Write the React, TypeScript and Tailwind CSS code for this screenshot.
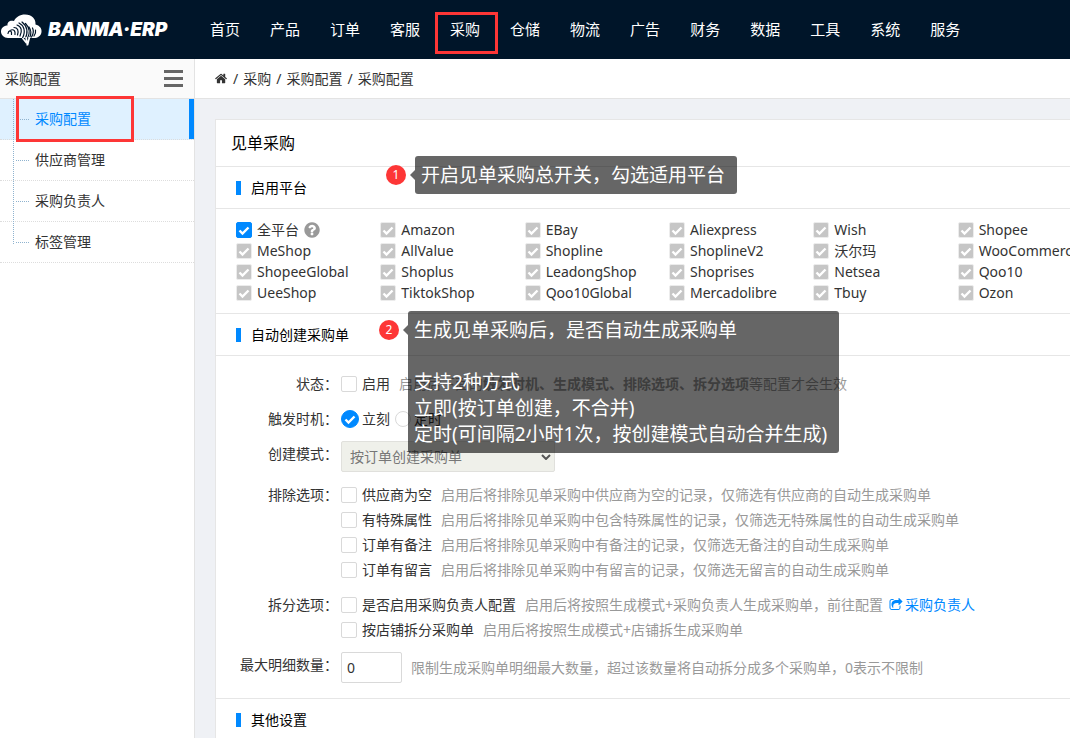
import { Fragment, useState, type ReactNode } from "react";

const navItems = ["首页", "产品", "订单", "客服", "采购", "仓储", "物流", "广告", "财务", "数据", "工具", "系统", "服务"];

const sideItems = ["采购配置", "供应商管理", "采购负责人", "标签管理"];

const crumbs = ["采购", "采购配置", "采购配置"];

const platforms = [
  "全平台", "Amazon", "EBay", "Aliexpress", "Wish", "Shopee",
  "MeShop", "AllValue", "Shopline", "ShoplineV2", "沃尔玛", "WooCommerce",
  "ShopeeGlobal", "Shoplus", "LeadongShop", "Shoprises", "Netsea", "Qoo10",
  "UeeShop", "TiktokShop", "Qoo10Global", "Mercadolibre", "Tbuy", "Ozon",
];

const excludeOptions = [
  { name: "供应商为空", hint: "启用后将排除见单采购中供应商为空的记录，仅筛选有供应商的自动生成采购单" },
  { name: "有特殊属性", hint: "启用后将排除见单采购中包含特殊属性的记录，仅筛选无特殊属性的自动生成采购单" },
  { name: "订单有备注", hint: "启用后将排除见单采购中有备注的记录，仅筛选无备注的自动生成采购单" },
  { name: "订单有留言", hint: "启用后将排除见单采购中有留言的记录，仅筛选无留言的自动生成采购单" },
];

function Logo() {
  return (
    <a href="#" className="flex w-[195px] shrink-0 items-center gap-[6px] text-white">
      <svg viewBox="0 0 42 34" className="h-[34px] w-[42px] shrink-0">
        <path
          fill="#fff"
          d="M8 25C4 25 1 22 1 18.500C1 15 4 12.500 7.500 12.500C7 9 10 7 14 8C16 4 20 1.500 25 1.500C32 1.500 36 6 35.500 11.500C39.500 12.500 42 15.500 41.500 19C41 23 37.500 25 34 25Z"
        />
        {/* zebra stripes */}
        <g fill="none" stroke="#001529" strokeWidth="1.200" strokeLinecap="round">
          <path d="M8 20.500c.5-3 3-3.500 3.500-1v2M11 17c3-1 4.500 1 4 4.500M14 14.500c3.500 0 5 3 3.500 7.500M17 12c4.500 1.500 5.500 6 3 11M19 10c5 2.500 7 8 3.500 15" />
          <path d="M22 9c5 4 7 9 3 17.500M25.500 10.500c4 4 5 9 2 15M29 14c2.500 3.500 2.500 7 .5 11M32.500 15c1.500 3 1 6-1 9M35.500 17c.5 2.500 0 4-1.500 6" />
        </g>
        <path fill="none" stroke="#fff" strokeWidth="1.700" d="M22.500 25l4 5M26 24l1.500 8.500M29.500 24l-2 8" />
      </svg>
      <span className="font-[Inter,sans-serif] text-[19px] leading-6 font-black italic">BANMA·ERP</span>
    </a>
  );
}

function FaIcon({ d, className }: { d: string; className: string }) {
  return (
    <svg viewBox="0 0 1792 1792" className={className} fill="currentColor" aria-hidden="true">
      <path d={d} />
    </svg>
  );
}

const homePath =
  "M1408 992v480q0 26-19 45t-45 19h-384v-384h-256v384h-384q-26 0-45-19t-19-45v-480q0-1 .5-3t.5-3l575-474 575 474q1 2 1 6zm223-69l-62 74q-8 9-21 11h-3q-13 0-21-7l-692-577-692 577q-12 8-24 7-13-2-21-11l-62-74q-8-10-7-23.5t11-21.5l719-599q32-26 76-26t76 26l244 204v-195q0-14 9-23t23-9h192q14 0 23 9t9 23v408l219 182q10 8 11 21.5t-7 23.5z";
const sharePath =
  "M1472 989v259q0 119-84.5 203.5t-203.5 84.5h-832q-119 0-203.5-84.5t-84.5-203.5v-832q0-119 84.5-203.5t203.5-84.5h255q13 0 22.5 9.5t9.5 22.5q0 27-26 32-77 26-133 60-10 4-16 4h-112q-66 0-113 47t-47 113v832q0 66 47 113t113 47h832q66 0 113-47t47-113v-214q0-19 18-29 28-13 54-37 16-16 35-8 21 9 21 29zm237-496l-384 384q-18 19-45 19-12 0-25-5-39-17-39-59v-192h-160q-323 0-438 131-119 137-74 473 3 23-20 34-8 2-12 2-16 0-26-13-10-14-21-31t-39.5-68.5-49.5-99.5-38.5-114-17.5-122q0-49 3.5-91t14-90 28-88 47-81.5 68.5-74 94.5-61.5 124.5-48.5 159.5-30.5 196.5-11h160v-192q0-42 39-59 13-5 25-5 26 0 45 19l384 384q19 19 19 45t-19 45z";
const questionPath =
  "M1024 1376v-192q0-14-9-23t-23-9h-192q-14 0-23 9t-9 23v192q0 14 9 23t23 9h192q14 0 23-9t9-23zm256-672q0-88-55.5-163t-138.5-116-170-41q-243 0-371 213-15 24 8 42l132 100q7 6 19 6 16 0 25-12 53-68 86-92 34-24 86-24 48 0 85.5 26t37.5 59q0 38-20 61t-68 45q-63 28-115.5 86.5t-52.5 125.5v36q0 14 9 23t23 9h192q14 0 23-9t9-23q0-19 21.5-49.5t54.5-49.5q32-18 49-28.5t46-35 44.5-48 28-60.5 12.5-81zm384 192q0 209-103 385.5t-279.5 279.5-385.5 103-385.5-103-279.5-279.5-103-385.5 103-385.5 279.5-279.5 385.5-103 385.5 103 279.5 279.5 103 385.5z";

function Tick() {
  return (
    <svg viewBox="0 0 16 16" className="pointer-events-none col-start-1 row-start-1 hidden size-4 peer-checked:block" fill="none" stroke="#fff" strokeWidth="2.400">
      <path d="M3.500 8.500L6.500 11.500L12.500 5.500" />
    </svg>
  );
}

function Check({ label, checked = false, disabled = false }: { label: string; checked?: boolean; disabled?: boolean }) {
  return (
    <label className="flex shrink-0 items-center gap-[5px] whitespace-nowrap">
      <span className="grid">
        <input
          type="checkbox"
          defaultChecked={checked}
          disabled={disabled}
          className="peer col-start-1 row-start-1 size-4 appearance-none rounded-xs border border-[#d9d9d9] bg-white checked:border-[#0089ff] checked:bg-[#0089ff] disabled:border-[#ececec] disabled:bg-[#c6c6c6]"
        />
        <Tick />
      </span>
      {label}
    </label>
  );
}

function Radio({ label, checked, onChange }: { label: string; checked: boolean; onChange: () => void }) {
  return (
    <label className="flex items-center gap-[3px]">
      <span className="grid place-items-center">
        <input
          type="radio"
          name="trigger"
          checked={checked}
          onChange={onChange}
          className="peer col-start-1 row-start-1 size-4 appearance-none rounded-full border border-[#d9d9d9] bg-white checked:size-[18px] checked:border-[#0089ff] checked:bg-[#0089ff]"
        />
        <Tick />
      </span>
      {label}
    </label>
  );
}

function SectionTitle({ title, children }: { title: string; children?: ReactNode }) {
  return (
    <div className="relative flex h-[42px] items-center gap-[10px] border-b border-[#e6e6e6] pl-5">
      <span className="h-[14px] w-[5px] bg-[#0089ff]" />
      <h3 className="text-black">{title}</h3>
      {children}
    </div>
  );
}

function Callout({ no, children }: { no: number; children: ReactNode }) {
  return (
    <div className="flex items-start text-white">
      <span className="mt-[9px] flex size-5 items-center justify-center rounded-full bg-[#fd3636] text-xs">{no}</span>
      <span className="mt-[14px] ml-1 border-y-[5px] border-r-[5px] border-y-transparent border-r-black/60" />
      <div className="rounded-[3px] bg-black/60 py-[6px] pr-3 pl-[6px] text-[19px] leading-[26px] whitespace-pre">{children}</div>
    </div>
  );
}

function FormRow({ label, htmlFor, children }: { label: string; htmlFor?: string; children: ReactNode }) {
  return (
    <div className="flex items-start gap-[3px]">
      <label htmlFor={htmlFor} className="w-[122px] shrink-0 text-right leading-[25px] whitespace-nowrap">
        {label}：
      </label>
      <div className="min-w-0 flex-1 whitespace-nowrap">{children}</div>
    </div>
  );
}

export default function App() {
  const [trigger, setTrigger] = useState("now");

  return (
    <div className="flex min-h-screen flex-col overflow-hidden bg-white font-['Noto_Sans','Noto_Sans_CJK_SC',sans-serif] text-sm text-[#333]">
      <header className="flex h-[59px] items-center bg-[#001529]">
        <Logo />
        <nav className="flex h-full items-center text-[15px] text-white">
          {navItems.map((item) => (
            <a key={item} href="#" className="relative flex h-full items-center px-[15px] whitespace-nowrap">
              {item}
              {item === "采购" && <span className="absolute top-3 left-0 h-[42px] w-[63px] border-3 border-[#fd3636]" />}
            </a>
          ))}
        </nav>
      </header>

      <div className="flex flex-1">
        <aside className="w-[195px] shrink-0 border-r border-[#e3e3e3]">
          <div className="flex h-10 items-center justify-between border-b border-[#e3e3e3] bg-[#fafafa] pr-[11px] pl-[5px]">
            <h2>采购配置</h2>
            <button type="button" aria-label="菜单" className="flex w-[19px] flex-col gap-1">
              <span className="h-[3px] bg-[#666]" />
              <span className="h-[3px] bg-[#666]" />
              <span className="h-[3px] bg-[#666]" />
            </button>
          </div>
          <ul className="relative">
            {sideItems.map((item, i) => (
              <li
                key={item}
                className={
                  i === 0
                    ? "h-[41px] border-b border-dotted border-[#ddd] bg-[#dff1ff] text-[#0089ff]"
                    : "h-[41px] border-b border-dotted border-[#ddd]"
                }
              >
                <a href="#" className={i === 0 ? "flex h-10 items-center border-r-5 border-solid border-[#0089ff] pl-4" : "flex h-10 items-center pl-4"}>
                  <span className="mr-[6px] w-[13px] border-t border-dotted border-[#8fb3cf]" />
                  {item}
                </a>
              </li>
            ))}
            <li aria-hidden="true" className="absolute top-0 left-[13px] h-[145px] border-l border-dotted border-[#8fb3cf]" />
            <li aria-hidden="true" className="absolute -top-[3px] left-4 h-[46px] w-[118px] border-3 border-[#fd3636]" />
          </ul>
        </aside>

        <div className="flex min-w-0 flex-1 flex-col">
          <div className="flex h-10 items-center gap-[5px] border-b border-[#e3e3e3] pl-5">
            <FaIcon d={homePath} className="size-[13px]" />
            {crumbs.map((c, i) => (
              <Fragment key={i}>
                <span>/</span>
                <span>{c}</span>
              </Fragment>
            ))}
          </div>

          <main className="flex-1 bg-[#eff1f5] pt-5 pl-5">
            <section className="min-h-full border-t border-l border-[#e6e6e6] bg-white">
              <h1 className="border-b border-[#e6e6e6] px-[15px] py-[11px] text-base text-black">见单采购</h1>

              <SectionTitle title="启用平台">
                <div className="absolute -top-[11px] left-[170px] z-10">
                  <Callout no={1}>开启见单采购总开关，勾选适用平台</Callout>
                </div>
              </SectionTitle>
              <div className="-mr-8 grid grid-cols-6 py-[10px] pl-5">
                {platforms.map((p, i) => (
                  <div key={p} className="flex h-[21px] items-center gap-1">
                    <Check label={p} checked disabled={i > 0} />
                    {i === 0 && <FaIcon d={questionPath} className="size-[18px] text-[#999]" />}
                  </div>
                ))}
              </div>

              <div className="border-t border-[#e6e6e6]">
                <SectionTitle title="自动创建采购单">
                  <div className="absolute -top-[3px] left-[163px] z-10">
                    <Callout no={2}>
                      {"生成见单采购后，是否自动生成采购单\n\n支持2种方式\n立即(按订单创建，不合并)\n定时(可间隔2小时1次，按创建模式自动合并生成)"}
                    </Callout>
                  </div>
                </SectionTitle>
              </div>

              <form className="flex flex-col gap-[10px] py-[15px]">
                <FormRow label="状态">
                  <div className="flex h-[25px] items-center gap-[9px]">
                    <Check label="启用" />
                    <p className="text-[#999]">
                      启用后下面的
                      <strong>触发时机、生成模式、排除选项、拆分选项</strong>
                      等配置才会生效
                    </p>
                  </div>
                </FormRow>
                <FormRow label="触发时机">
                  <div className="flex h-[25px] items-center gap-[5px]">
                    <Radio label="立刻" checked={trigger === "now"} onChange={() => setTrigger("now")} />
                    <Radio label="定时" checked={trigger === "timer"} onChange={() => setTrigger("timer")} />
                  </div>
                </FormRow>
                <FormRow label="创建模式" htmlFor="mode">
                  <div className="grid w-[214px] items-center">
                    <select
                      id="mode"
                      disabled
                      className="col-start-1 row-start-1 h-[31px] w-full appearance-none rounded-xs border border-[#e0e0dc] bg-[#eff0ea] px-2 text-[#777]"
                    >
                      <option>按订单创建采购单</option>
                    </select>
                    <svg viewBox="0 0 10 6" className="pointer-events-none col-start-1 row-start-1 mr-1 h-[6px] w-[10px] justify-self-end" fill="none" stroke="#555" strokeWidth="2">
                      <path d="M1 1l4 4 4-4" />
                    </svg>
                  </div>
                </FormRow>
                <FormRow label="排除选项">
                  {excludeOptions.map((o) => (
                    <div key={o.name} className="flex h-[25px] items-center gap-[9px]">
                      <Check label={o.name} />
                      <p className="text-[#999]">{o.hint}</p>
                    </div>
                  ))}
                </FormRow>
                <FormRow label="拆分选项">
                  <div className="flex h-[25px] items-center gap-[9px]">
                    <Check label="是否启用采购负责人配置" />
                    <p className="flex items-center text-[#999]">
                      启用后将按照生成模式+采购负责人生成采购单，前往配置
                      <a href="#" className="ml-[6px] flex items-center gap-[2px] text-[#0089ff]">
                        <FaIcon d={sharePath} className="size-[14px]" />
                        采购负责人
                      </a>
                    </p>
                  </div>
                  <div className="flex h-[25px] items-center gap-[9px]">
                    <Check label="按店铺拆分采购单" />
                    <p className="text-[#999]">启用后将按照生成模式+店铺拆生成采购单</p>
                  </div>
                </FormRow>
                <FormRow label="最大明细数量" htmlFor="max">
                  <div className="flex items-center gap-[9px]">
                    <input id="max" type="text" defaultValue="0" className="h-[31px] w-[61px] rounded-xs border border-[#d9d9d9] px-[5px]" />
                    <p className="text-[#999]">限制生成采购单明细最大数量，超过该数量将自动拆分成多个采购单，0表示不限制</p>
                  </div>
                </FormRow>
              </form>

              <div className="border-t border-[#e6e6e6]">
                <SectionTitle title="其他设置" />
              </div>
            </section>
          </main>
        </div>
      </div>
    </div>
  );
}
